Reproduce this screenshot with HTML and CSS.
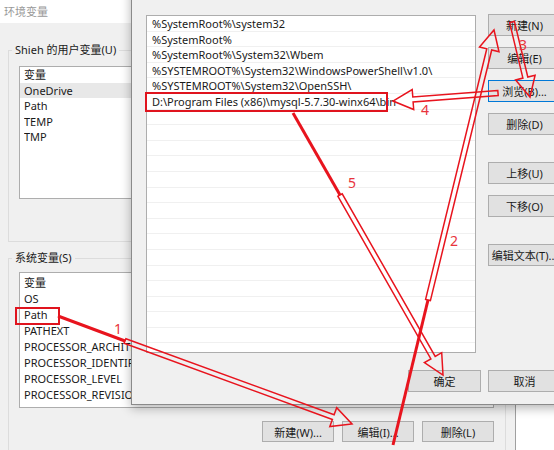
FILE: index.html
```html
<!DOCTYPE html>
<html lang="zh-CN">
<head>
    <meta charset="UTF-8">
    <meta name="viewport" content="width=device-width, initial-scale=1.0">
    <title>环境变量</title>
    <link rel="stylesheet" href="styles.css">
</head>
<body>
    <div class="env-window">
        <div class="title-bar">环境变量</div>

        <fieldset class="group user-group">
            <legend>Shieh 的用户变量(U)</legend>
            <div class="listbox user-list">
                <div class="var-row"><span>变量</span><span>值</span></div>
                <div class="var-row selected"><span>OneDrive</span><span>C:\Users\Shieh\OneDrive</span></div>
                <div class="var-row"><span>Path</span><span>%USERPROFILE%\AppData\Local\Microsoft\WindowsApps;</span></div>
                <div class="var-row"><span>TEMP</span><span>%USERPROFILE%\AppData\Local\Temp</span></div>
                <div class="var-row"><span>TMP</span><span>%USERPROFILE%\AppData\Local\Temp</span></div>
            </div>
        </fieldset>

        <fieldset class="group sys-group">
            <legend>系统变量(S)</legend>
            <div class="listbox sys-list">
                <div class="var-row"><span>变量</span><span>值</span></div>
                <div class="var-row"><span>OS</span><span>Windows_NT</span></div>
                <div class="var-row"><span>Path</span><span>C:\WINDOWS\system32;C:\WINDOWS;C:\WINDOWS\System32\Wbem</span></div>
                <div class="var-row"><span>PATHEXT</span><span>.COM;.EXE;.BAT;.CMD;.VBS;.VBE;.JS;.JSE;.WSF;.WSH;.MSC</span></div>
                <div class="var-row"><span>PROCESSOR_ARCHITECTURE</span><span>AMD64</span></div>
                <div class="var-row"><span>PROCESSOR_IDENTIFIER</span><span>Intel64 Family 6 Model 158 Stepping 10, GenuineIntel</span></div>
                <div class="var-row"><span>PROCESSOR_LEVEL</span><span>6</span></div>
                <div class="var-row"><span>PROCESSOR_REVISION</span><span>9e0a</span></div>
                <div class="var-row"><span>PSModulePath</span><span>%ProgramFiles%\WindowsPowerShell\Modules;C:\WINDOWS\system32\WindowsPowerShell\v1.0\Modules</span></div>
            </div>
            <div class="button-row">
                <button class="btn">新建(W)...</button>
                <button class="btn">编辑(I)...</button>
                <button class="btn">删除(L)</button>
            </div>
        </fieldset>
    </div>

    <div class="edit-dialog">
        <div class="path-list">
            <div class="path-row">%SystemRoot%\system32</div>
            <div class="path-row">%SystemRoot%</div>
            <div class="path-row">%SystemRoot%\System32\Wbem</div>
            <div class="path-row">%SYSTEMROOT%\System32\WindowsPowerShell\v1.0\</div>
            <div class="path-row">%SYSTEMROOT%\System32\OpenSSH\</div>
            <div class="path-row">D:\Program Files (x86)\mysql-5.7.30-winx64\bin</div>
            <div class="path-row"></div>
            <div class="path-row"></div>
            <div class="path-row"></div>
            <div class="path-row"></div>
            <div class="path-row"></div>
            <div class="path-row"></div>
            <div class="path-row"></div>
            <div class="path-row"></div>
            <div class="path-row"></div>
            <div class="path-row"></div>
            <div class="path-row"></div>
            <div class="path-row"></div>
            <div class="path-row"></div>
            <div class="path-row"></div>
            <div class="path-row"></div>
            <div class="path-row"></div>
        </div>
        <div class="side-buttons">
            <button class="btn">新建(N)</button>
            <button class="btn">编辑(E)</button>
            <button class="btn focused">浏览(B)...</button>
            <button class="btn">删除(D)</button>
            <button class="btn spaced">上移(U)</button>
            <button class="btn">下移(O)</button>
            <button class="btn spaced">编辑文本(T)...</button>
        </div>
        <div class="dialog-footer">
            <button class="btn">确定</button>
            <button class="btn">取消</button>
        </div>
    </div>

    <svg class="marks" width="554" height="450" viewBox="0 0 554 450">
        <rect x="16" y="308" width="43" height="16"></rect>
        <rect x="146" y="93" width="241" height="18"></rect>
        <g id="arrows"></g>
        <text x="118" y="328">1</text>
        <text x="454" y="240">2</text>
        <text x="523" y="44">3</text>
        <text x="425" y="109">4</text>
        <text x="352" y="182">5</text>
    </svg>

    <script>
        // hollow arrows: from -> to, optional single line leading into the tail
        const arrows = [
            { tail: [58, 316], from: [125, 341], to: [352, 424] },
            { tail: [393, 445], from: [428, 300], to: [494, 30] },
            { from: [512, 22], to: [530, 97] },
            { from: [498, 93], to: [393, 101] },
            { tail: [293, 113], from: [340, 195], to: [443, 375] }
        ];

        function arrowPoints(a, b) {
            let w = 2.5, H = 10, h = 20;
            let dx = b[0] - a[0], dy = b[1] - a[1];
            let len = Math.hypot(dx, dy);
            let ux = dx / len, uy = dy / len;
            let px = -uy, py = ux;
            let nx = b[0] - ux * h, ny = b[1] - uy * h;
            let pts = [
                [a[0] + px * w, a[1] + py * w],
                [nx + px * w, ny + py * w],
                [nx + px * H, ny + py * H],
                b,
                [nx - px * H, ny - py * H],
                [nx - px * w, ny - py * w],
                [a[0] - px * w, a[1] - py * w]
            ];
            return pts.map(p => p[0].toFixed(1) + ',' + p[1].toFixed(1)).join(' ');
        }

        let group = document.getElementById('arrows');
        let ns = 'http://www.w3.org/2000/svg';
        arrows.forEach(arrow => {
            if (arrow.tail) {
                let line = document.createElementNS(ns, 'line');
                line.setAttribute('x1', arrow.tail[0]);
                line.setAttribute('y1', arrow.tail[1]);
                line.setAttribute('x2', arrow.from[0]);
                line.setAttribute('y2', arrow.from[1]);
                line.setAttribute('class', 'lead');
                group.appendChild(line);
            }
            let poly = document.createElementNS(ns, 'polygon');
            poly.setAttribute('points', arrowPoints(arrow.from, arrow.to));
            group.appendChild(poly);
        });
    </script>
</body>
</html>
```

FILE: styles.css
```css
* {
    box-sizing: border-box;
}
body {
    margin: 0;
    width: 554px;
    height: 450px;
    overflow: hidden;
    position: relative;
    background: #fff;
    font-family: "Noto Sans", "Noto Sans CJK SC", sans-serif;
    font-size: 11px;
    color: #1a1a1a;
}
.env-window {
    width: 516px;
    height: 450px;
    background: #f0f0f0;
    border-right: 1px solid #a0a0a0;
    overflow: hidden;
}
.title-bar {
    height: 23px;
    line-height: 23px;
    padding-left: 4px;
    background: #fff;
    color: #999;
}
.group {
    margin: 19px 9px 0 8px;
    padding: 8px 11px 42px 10px;
    border: 1px solid #dcdcdc;
    min-width: 0;
}
.group legend {
    padding: 0 3px;
    margin-left: -7px;
    line-height: 16px;
}
.sys-group {
    margin-top: 8px;
    padding: 6px 11px 40px 10px;
}
.listbox {
    background: #fff;
    border: 1px solid #adadad;
    overflow: hidden;
}
.user-list {
    height: 133px;
}
.sys-list {
    height: 136px;
    padding-top: 2px;
}
.var-row {
    display: flex;
    height: 16px;
    line-height: 16px;
    padding-left: 4px;
    white-space: nowrap;
}
.user-list .var-row {
    height: 15.5px;
    line-height: 15.5px;
}
.var-row span:first-child {
    flex: none;
    width: 142px;
    overflow: hidden;
}
.var-row.selected {
    background: #e8e8e8;
}
.button-row {
    display: flex;
    justify-content: flex-end;
    gap: 8px;
    margin-top: 13px;
}
.btn {
    width: 72px;
    height: 21px;
    padding: 0;
    background: #e1e1e1;
    border: 1px solid #adadad;
    font-family: inherit;
    font-size: 11px;
    color: #1a1a1a;
    white-space: nowrap;
}
.edit-dialog {
    position: absolute;
    left: 131px;
    top: -30px;
    width: 441px;
    height: 435px;
    padding: 44px 0 0 14px;
    background: #f0f0f0;
    border: 1px solid #8a8a8a;
    box-shadow: 0 3px 10px rgba(0, 0, 0, 0.3);
    display: grid;
    grid-template-columns: 330px 73px;
    grid-template-rows: 338px auto;
    column-gap: 12px;
    align-content: start;
}
.path-list {
    background: #fff;
    border: 1px solid #adadad;
    overflow: hidden;
}
.path-row {
    height: 15.6px;
    line-height: 15px;
    padding-left: 5px;
    border-bottom: 1px solid #f0f0f0;
    white-space: nowrap;
}
.side-buttons {
    display: flex;
    flex-direction: column;
    gap: 11px;
    margin-top: -1px;
}
.side-buttons .btn,
.dialog-footer .btn {
    width: 73px;
    height: 22px;
}
.side-buttons .spaced {
    margin-top: 16px;
}
.btn.focused {
    border-color: #0078d7;
}
.dialog-footer {
    grid-column: 1 / 3;
    display: flex;
    justify-content: flex-end;
    gap: 7px;
    margin-top: 17px;
}
.marks {
    position: absolute;
    left: 0;
    top: 0;
    pointer-events: none;
}
.marks rect {
    fill: none;
    stroke: #e0141e;
    stroke-width: 2;
}
.marks polygon {
    fill: none;
    stroke: #e8141e;
    stroke-width: 1.5;
    stroke-linejoin: miter;
}
.marks .lead {
    stroke: #e8141e;
    stroke-width: 3;
}
.marks text {
    fill: #e8343c;
    font-family: "Noto Sans", sans-serif;
    font-size: 14px;
    text-anchor: middle;
    dominant-baseline: central;
}
```
